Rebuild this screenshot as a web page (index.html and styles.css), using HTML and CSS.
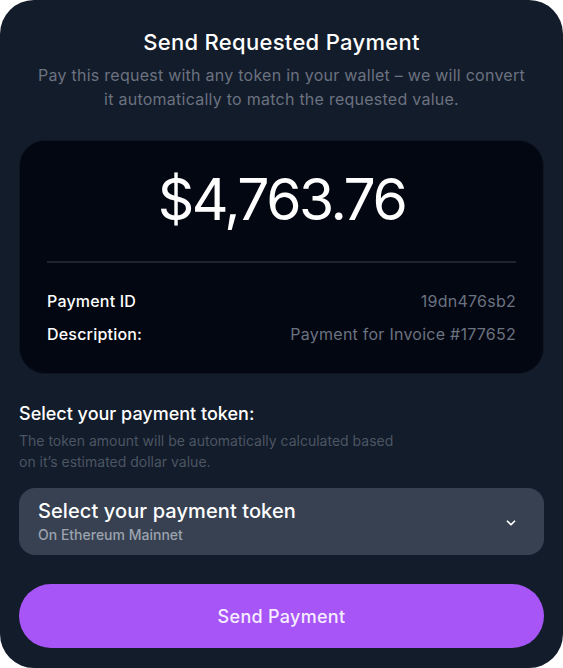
FILE: index.html
```html
<!DOCTYPE html>
<html lang="en">
<head>
    <meta charset="UTF-8">
    <meta name="viewport" content="width=device-width, initial-scale=1.0">
    <title>Send Requested Payment</title>
    <link rel="stylesheet" href="styles.css">
</head>
<body>
    <div class="card">
        <h1 class="title">Send Requested Payment</h1>
        <p class="subtitle">Pay this request with any token in your wallet – we will convert it automatically to match the requested value.</p>

        <div class="summary">
            <div class="amount">$4,763.76</div>
            <div class="divider"></div>
            <div class="row">
                <span class="label">Payment ID</span>
                <span class="value">19dn476sb2</span>
            </div>
            <div class="row">
                <span class="label">Description:</span>
                <span class="value">Payment for Invoice #177652</span>
            </div>
        </div>

        <div class="token-section">
            <h3>Select your payment token:</h3>
            <p class="hint">The token amount will be automatically calculated based on it’s estimated dollar value.</p>
        </div>

        <div class="select">
            <div class="select-text">
                <div class="select-title">Select your payment token</div>
                <div class="select-sub">On Ethereum Mainnet</div>
            </div>
            <svg class="chevron" width="14" height="14" viewBox="0 0 24 24" fill="none" stroke="currentColor" stroke-width="3" stroke-linecap="round" stroke-linejoin="round">
                <path d="M6 9l6 6 6-6"/>
            </svg>
        </div>

        <button class="send">Send Payment</button>
    </div>
</body>
</html>
```

FILE: styles.css
```css
* {
    box-sizing: border-box;
}
body {
    margin: 0;
    background: #ffffff;
    font-family: Inter, "Noto Sans", sans-serif;
}
.card {
    width: 563px;
    height: 668px;
    background: #131c2a;
    border-radius: 34px;
    padding: 28px 19px 20px 19px;
    display: flex;
    flex-direction: column;
}
.title {
    margin: 0;
    font-size: 22px;
    line-height: 28px;
    font-weight: 500;
    letter-spacing: 0.3px;
    color: #ffffff;
    text-align: center;
}
.subtitle {
    margin: 7px auto 0;
    max-width: 492px;
    font-size: 16px;
    line-height: 24px;
    letter-spacing: 0.25px;
    color: #6b7280;
    text-align: center;
}
.summary {
    margin-top: 29px;
    background: #030712;
    border: 1px solid #0f1522;
    border-radius: 26px;
    padding: 23px 27px 27px;
}
.amount {
    font-size: 57px;
    line-height: 72px;
    font-weight: 400;
    color: #ffffff;
    text-align: center;
    letter-spacing: -2.5px;
}
.divider {
    height: 2px;
    background: #1f2530;
    margin-top: 25px;
    margin-bottom: 26px;
}
.row {
    display: flex;
    justify-content: space-between;
    font-size: 16px;
    line-height: 24px;
}
.row + .row {
    margin-top: 9px;
}
.label {
    color: #ffffff;
    font-weight: 500;
    letter-spacing: 0.2px;
}
.value {
    color: #6b7280;
    letter-spacing: 0.25px;
}
.token-section {
    margin-top: 26px;
}
.token-section h3 {
    margin: 0;
    font-size: 18px;
    line-height: 28px;
    font-weight: 500;
    color: #ffffff;
}
.hint {
    margin: 2px 0 0;
    max-width: 390px;
    font-size: 14px;
    line-height: 21px;
    color: #4b5563;
}
.select {
    margin-top: 16px;
    height: 67px;
    background: #374151;
    border-radius: 16px;
    padding: 9px 26px 10px 19px;
    display: flex;
    align-items: center;
    justify-content: space-between;
}
.select-title {
    font-size: 20px;
    line-height: 28px;
    font-weight: 500;
    letter-spacing: 0.1px;
    color: #ffffff;
}
.select-sub {
    font-size: 14px;
    line-height: 20px;
    font-weight: 500;
    color: #9ca3af;
}
.chevron {
    color: #ffffff;
    margin-top: 4px;
}
.send {
    margin-top: 29px;
    height: 64px;
    border: none;
    border-radius: 32px;
    background: #a855f7;
    color: #f5ecff;
    font-family: inherit;
    font-size: 18px;
    font-weight: 500;
    letter-spacing: 0.3px;
    cursor: pointer;
}
```
